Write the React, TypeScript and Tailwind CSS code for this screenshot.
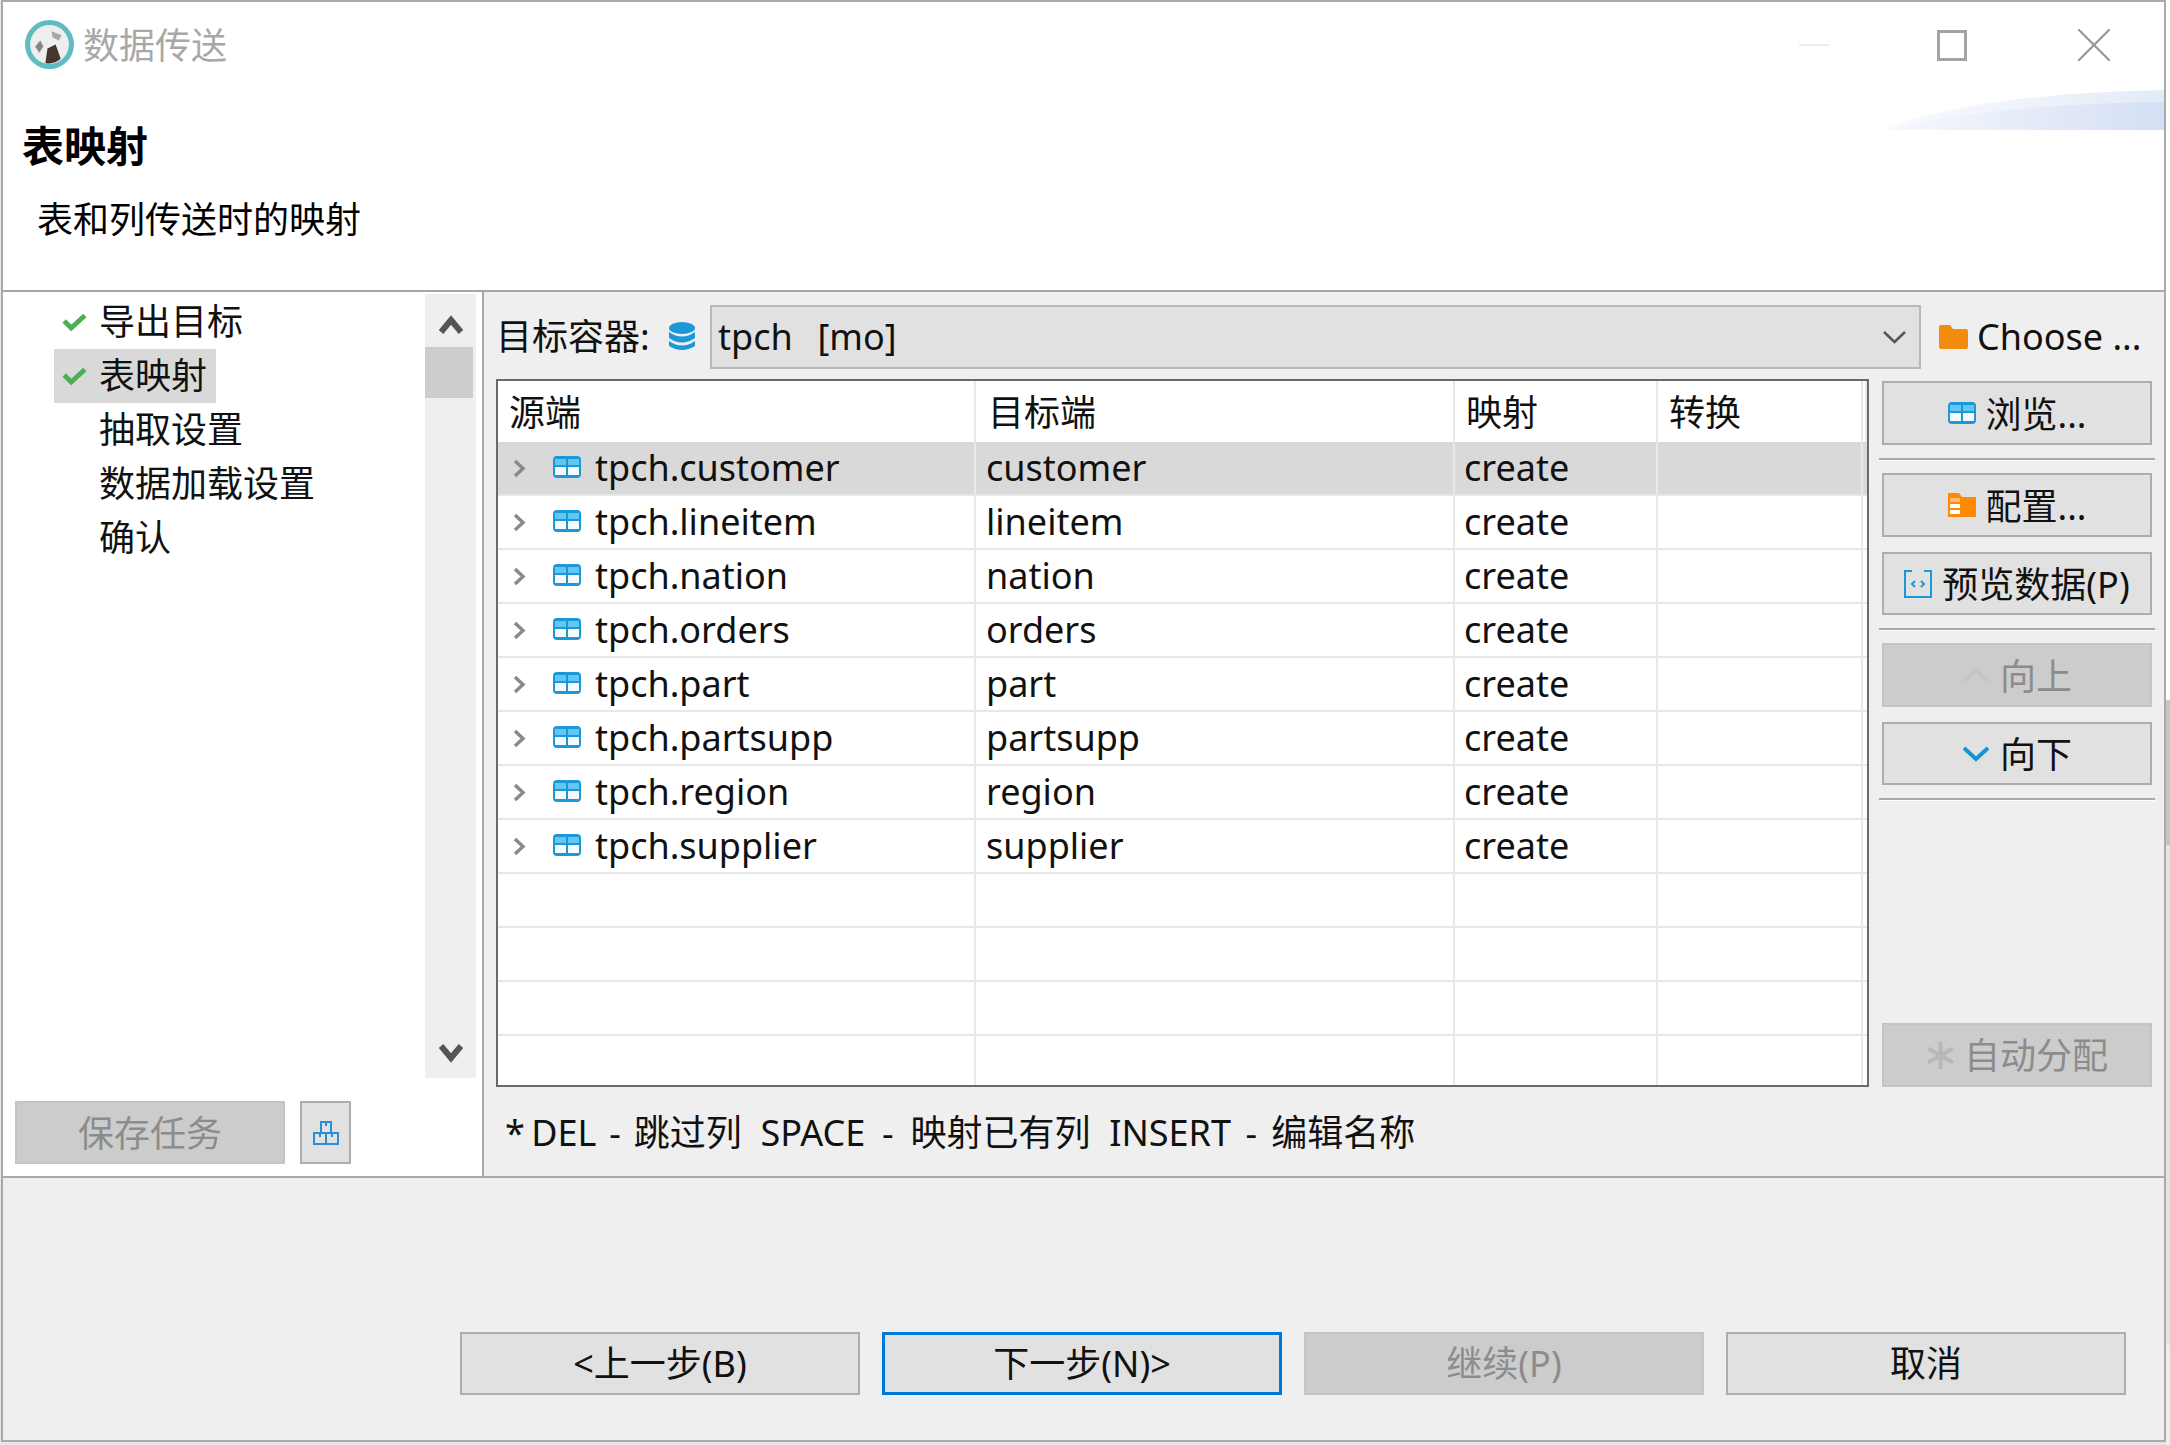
import React from "react";
import { LuX } from "react-icons/lu";

const rows = [
  ["tpch.customer", "customer"],
  ["tpch.lineitem", "lineitem"],
  ["tpch.nation", "nation"],
  ["tpch.orders", "orders"],
  ["tpch.part", "part"],
  ["tpch.partsupp", "partsupp"],
  ["tpch.region", "region"],
  ["tpch.supplier", "supplier"],
  ["", ""],
  ["", ""],
  ["", ""],
  ["", ""],
];

const navItems = [
  { label: "导出目标", done: true },
  { label: "表映射", done: true, active: true },
  { label: "抽取设置" },
  { label: "数据加载设置" },
  { label: "确认" },
];

const headers = [
  { label: "源端", pad: "pl-[11px]" },
  { label: "目标端", pad: "pl-[12px]" },
  { label: "映射", pad: "pl-[11px]" },
  { label: "转换", pad: "pl-[11px]" },
  { label: "", pad: "" },
];

function TableIcon({ className }: { className?: string }) {
  return (
    <svg viewBox="0 0 28 22" className={className}>
      <rect width="28" height="22" rx="4" fill="#1c98d8" />
      <rect x="2" y="3" width="11" height="6" fill="#62c6f2" />
      <rect x="15" y="3" width="11" height="6" fill="#62c6f2" />
      <rect x="2" y="11" width="11" height="8" fill="#f4fafd" />
      <rect x="15" y="11" width="11" height="8" fill="#f4fafd" />
    </svg>
  );
}

function Chevron({ up, color, width }: { up?: boolean; color: string; width: number }) {
  return (
    <svg viewBox="0 0 28 16" className="w-[28px] h-[16px] shrink-0" fill="none" stroke={color} strokeWidth={width}>
      <path d={up ? "M2 14 L14 3 L26 14" : "M2 2 L14 13 L26 2"} />
    </svg>
  );
}

function Btn({
  children,
  disabled,
  focused,
  className = "",
}: {
  children: React.ReactNode;
  disabled?: boolean;
  focused?: boolean;
  className?: string;
}) {
  const tone = disabled
    ? "bg-[#cccccc] border-[#c4c4c4] text-[#8c8c8c]"
    : focused
      ? "bg-[#e1e1e1] border-[#0078d7] text-[#111]"
      : "bg-[#e1e1e1] border-[#adadad] text-[#111]";
  return (
    <div className={`flex items-center justify-center ${focused ? "border-[3px]" : "border-2"} ${tone} ${className}`}>
      {children}
    </div>
  );
}

function Sep({ className = "" }: { className?: string }) {
  return <div className={`h-[3px] -mx-[3px] bg-[#a8a8a8] border-b border-white shrink-0 ${className}`} />;
}

export default function App() {
  return (
    <div className="flex w-[2170px] h-[1445px] pl-[1px] bg-[#e6e6e6] text-[36px] leading-[54px] text-[#111] overflow-hidden font-['Noto_Sans','Noto_Sans_CJK_SC',sans-serif]">
      <div className="w-[2165px] h-[1442px] shrink-0 border-2 border-[#a9a9a9] bg-[#efefef] flex flex-col">
        {/* header */}
        <div className="relative h-[290px] bg-white border-b-2 border-[#a6a6a6] shrink-0">
          <div className="flex items-center h-[88px] pl-[22px]">
            <svg viewBox="0 0 48 48" className="w-[49px] h-[49px] -mt-[3px]">
              <circle cx="24" cy="24" r="24" fill="#5fbdc2" />
              <circle cx="24" cy="24" r="19" fill="#eeeeee" />
              <path d="M20 42 L22 28 L30 24 L35 38 Q28 44 20 42Z" fill="#46342f" />
              <path d="M10 26 L15 20 L18 26 L14 32Z" fill="#8a8583" />
              <path d="M26 11 L36 15 L33 20 L27 17Z" fill="#a9a6a4" />
            </svg>
            <span className="ml-[9px] text-[#a8a8a8]">数据传送</span>
          </div>
          <div className="absolute right-[40px] top-[13px] text-[#999]">
            <LuX className="w-[60px] h-[60px]" strokeWidth={0.9} />
          </div>
          <div className="absolute right-[197px] top-[28px] w-[30px] h-[31px] border-[3px] border-[#a3a3a3]" />
          <div className="absolute right-[335px] top-[42px] w-[30px] h-[2px] bg-[#ececec]" />
          <svg viewBox="0 0 281 40" preserveAspectRatio="none" className="absolute right-0 top-[88px] w-[281px] h-[40px]">
            <defs>
              <linearGradient id="ban" x1="0" x2="1" y1="0" y2="0">
                <stop offset="0" stopColor="#f7f9fd" />
                <stop offset="1" stopColor="#d4dff4" />
              </linearGradient>
            </defs>
            <path d="M0 40 C60 14 170 2 281 0 L281 40Z" fill="url(#ban)" opacity="0.65" />
            <path d="M0 40 C70 22 180 13 281 12 L281 40Z" fill="url(#ban)" />
          </svg>
          <div className="pl-[19px] pt-[30px] font-bold text-[42px] leading-[52px] text-black">表映射</div>
          <div className="pl-[34px] pt-[21px] text-black">表和列传送时的映射</div>
        </div>

        {/* body */}
        <div className="flex h-[886px] border-b-2 border-[#a9a9a9] shrink-0">
          {/* wizard nav */}
          <div className="w-[479px] shrink-0 bg-white flex">
            <div className="w-[422px] shrink-0 pt-[3px] pb-[12px] flex flex-col justify-between">
              <div className="pl-[51px]">
                {navItems.map((n) => (
                  <div
                    key={n.label}
                    className={`flex items-center h-[54px] ${n.active ? "bg-[#d9d9d9] w-[162px]" : ""}`}
                  >
                    <span className="w-[45px] shrink-0 pl-[8px]">
                      {n.done && (
                        <svg viewBox="0 0 23 16" className="w-[25px] h-[18px]" fill="none" stroke="#4caf50" strokeWidth="4.5">
                          <path d="M2 7 L8.5 13.5 L21 2" />
                        </svg>
                      )}
                    </span>
                    <span>{n.label}</span>
                  </div>
                ))}
              </div>
              <div className="flex gap-[15px] pl-[12px]">
                <Btn disabled className="w-[270px] h-[63px]">
                  <span className="pt-[2px]">保存任务</span>
                </Btn>
                <Btn className="w-[51px] h-[63px]">
                  <svg viewBox="0 0 26 26" className="w-[26px] h-[26px]" fill="none" stroke="#2b8fd8" strokeWidth="2">
                    <rect x="8" y="2" width="10" height="11" />
                    <rect x="1" y="13" width="12" height="11" />
                    <rect x="13" y="13" width="12" height="11" />
                    <path d="M13 3v3M7 14v3M19 14v3" />
                  </svg>
                </Btn>
              </div>
            </div>
            <div className="w-[51px] h-[784px] mt-[2px] bg-[#efefef] flex flex-col">
              <svg viewBox="0 0 24 19" className="w-[24px] h-[19px] mt-[21px] ml-[14px]" fill="none" stroke="#555" strokeWidth="6">
                <path d="M2 17 L12 5 L22 17" />
              </svg>
              <div className="w-[48px] h-[51px] mt-[13px] bg-[#cdcdcd]" />
              <div className="flex-1" />
              <svg viewBox="0 0 24 19" className="w-[24px] h-[19px] mb-[15px] ml-[14px]" fill="none" stroke="#555" strokeWidth="6">
                <path d="M2 2 L12 14 L22 2" />
              </svg>
            </div>
          </div>
          <div className="w-[2px] bg-[#a9a9a9] shrink-0" />

          {/* main */}
          <div className="flex-1 flex flex-col pl-[12px] pt-[13px]">
            <div className="flex items-center h-[64px]">
              <span className="w-[172px] shrink-0">目标容器:</span>
              <svg viewBox="0 0 26 30" className="w-[26px] h-[30px] shrink-0 ml-[1px]">
                <ellipse cx="13" cy="6" rx="13" ry="6" fill="#1c98d8" />
                <path d="M0 10 Q13 19 26 10 V16 Q13 25 0 16Z" fill="#1c98d8" />
                <path d="M0 19 Q13 28 26 19 V24 Q13 32 0 24Z" fill="#1c98d8" />
              </svg>
              <div className="ml-[15px] w-[1211px] h-[64px] shrink-0 flex items-center justify-between bg-[#e1e1e1] border-2 border-[#b8b8b8] pl-[6px] pr-[13px] whitespace-pre">
                <span className="[word-spacing:3px]">tpch  [mo]</span>
                <svg viewBox="0 0 23 13" className="w-[23px] h-[13px]" fill="none" stroke="#555" strokeWidth="2.5">
                  <path d="M1 1 L11.5 11 L22 1" />
                </svg>
              </div>
              <svg viewBox="0 0 29 24" className="ml-[18px] w-[29px] h-[24px] shrink-0">
                <path d="M0 2 Q0 0 2 0 H11 L14 4 H27 Q29 4 29 6 V22 Q29 24 27 24 H2 Q0 24 0 22Z" fill="#f28c0f" />
              </svg>
              <span className="ml-[9px] whitespace-nowrap">Choose ...</span>
            </div>

            <div className="flex mt-[10px]">
              <div className="flex flex-col w-[1373px] shrink-0">
                <div className="h-[708px] shrink-0 border-2 border-[#6a6a6a] bg-white overflow-hidden">
                  <div className="grid grid-cols-[478px_479px_203px_205px_1fr] h-[61px]">
                    {headers.map((h, i) => (
                      <div key={i} className={`flex items-center pt-[2px] border-r-2 border-[#e8e8e8] ${h.pad}`}>
                        {h.label}
                      </div>
                    ))}
                  </div>
                  {rows.map((r, i) => (
                    <div
                      key={i}
                      className={`grid grid-cols-[478px_479px_203px_205px_1fr] h-[54px] border-b-2 border-[#e8e8e8] ${i === 0 ? "bg-[#d9d9d9]" : ""}`}
                    >
                      <div className="flex items-center border-r-2 border-[#e8e8e8] leading-[52px]">
                        {r[0] && (
                          <>
                            <svg viewBox="0 0 13 19" className="ml-[15px] w-[13px] h-[19px] shrink-0" fill="none" stroke="#8a8a8a" strokeWidth="3.5">
                              <path d="M2 2 L10 9.5 L2 17" />
                            </svg>
                            <TableIcon className="ml-[27px] w-[28px] h-[22px] shrink-0 -mt-[2px]" />
                            <span className="ml-[14px]">{r[0]}</span>
                          </>
                        )}
                      </div>
                      <div className="pl-[10px] border-r-2 border-[#e8e8e8] leading-[52px]">{r[1]}</div>
                      <div className="pl-[9px] border-r-2 border-[#e8e8e8] leading-[52px]">{r[0] ? "create" : ""}</div>
                      <div className="border-r-2 border-[#e8e8e8]" />
                      <div />
                    </div>
                  ))}
                </div>
                <div className="pl-[9px] pt-[19px] whitespace-pre">
                  <span className="[word-spacing:-3px]">* </span>
                  <span className="[word-spacing:3.5px]">DEL - 跳过列</span>
                  {"  "}
                  <span className="[word-spacing:7.5px]">SPACE - 映射已有列</span>
                  {"  "}
                  <span className="[word-spacing:5px]">INSERT - 编辑名称</span>
                </div>
              </div>

              {/* side buttons */}
              <div className="w-[270px] ml-[13px] pt-[2px] flex flex-col shrink-0 h-[708px]">
                <Btn className="h-[64px] gap-[10px] shrink-0">
                  <TableIcon className="w-[28px] h-[22px]" />
                  <span className="pt-[3px]">浏览...</span>
                </Btn>
                <Sep className="mt-[13px]" />
                <Btn className="h-[64px] gap-[10px] mt-[12px] shrink-0">
                  <svg viewBox="0 0 28 24" className="w-[28px] h-[24px]">
                    <path d="M0 0 H11 L14 4 H28 V24 H0Z" fill="#ff8a00" />
                    <rect x="2" y="5" width="10" height="4" fill="#ffb677" />
                    <rect x="2" y="11" width="10" height="4" fill="#fff" />
                    <rect x="2" y="17" width="10" height="4" fill="#fff" />
                  </svg>
                  <span className="pt-[4px]">配置...</span>
                </Btn>
                <Btn className="h-[63px] gap-[10px] mt-[15px] shrink-0">
                  <svg viewBox="0 0 28 28" className="w-[28px] h-[28px]" fill="none" stroke="#1c98d8" strokeWidth="2">
                    <path d="M8 1H1V27H27V1H20" />
                    <path d="M11 11L8 14L11 17M17 11L20 14L17 17" />
                  </svg>
                  <span className="pt-[3px]">预览数据(P)</span>
                </Btn>
                <Sep className="mt-[13px]" />
                <Btn disabled className="h-[64px] gap-[10px] mt-[12px] shrink-0">
                  <Chevron up color="#c2c2c2" width={3.5} />
                  <span className="pt-[4px]">向上</span>
                </Btn>
                <Btn className="h-[63px] gap-[10px] mt-[15px] shrink-0">
                  <Chevron color="#1596d2" width={4} />
                  <span className="pt-[3px]">向下</span>
                </Btn>
                <Sep className="mt-[13px]" />
                <div className="flex-1" />
                <Btn disabled className="h-[64px] gap-[9px] shrink-0">
                  <svg viewBox="0 0 29 29" className="w-[29px] h-[29px]" fill="none" stroke="#b8b8b8" strokeWidth="4">
                    <path d="M14.5 1V28M2 7.5L27 21.5M27 7.5L2 21.5" />
                  </svg>
                  <span className="pt-[2px]">自动分配</span>
                </Btn>
              </div>
            </div>
          </div>
        </div>

        {/* footer */}
        <div className="flex-1 flex justify-end items-start gap-[22px] pt-[154px] pr-[38px]">
          <Btn className="w-[400px] h-[63px]">&lt;上一步(B)</Btn>
          <Btn focused className="w-[400px] h-[63px]">下一步(N)&gt;</Btn>
          <Btn disabled className="w-[400px] h-[63px]">继续(P)</Btn>
          <Btn className="w-[400px] h-[63px]">取消</Btn>
        </div>
      </div>

      {/* sliver of what lies behind the dialog */}
      <div className="w-[4px] flex flex-col shrink-0">
        <div className="h-[700px] bg-white" />
        <div className="h-[145px] bg-[#c6c6c6]" />
        <div className="h-[500px] bg-[#e4e4e4]" />
        <div className="flex-1 bg-[#eeeeee]" />
      </div>
    </div>
  );
}
